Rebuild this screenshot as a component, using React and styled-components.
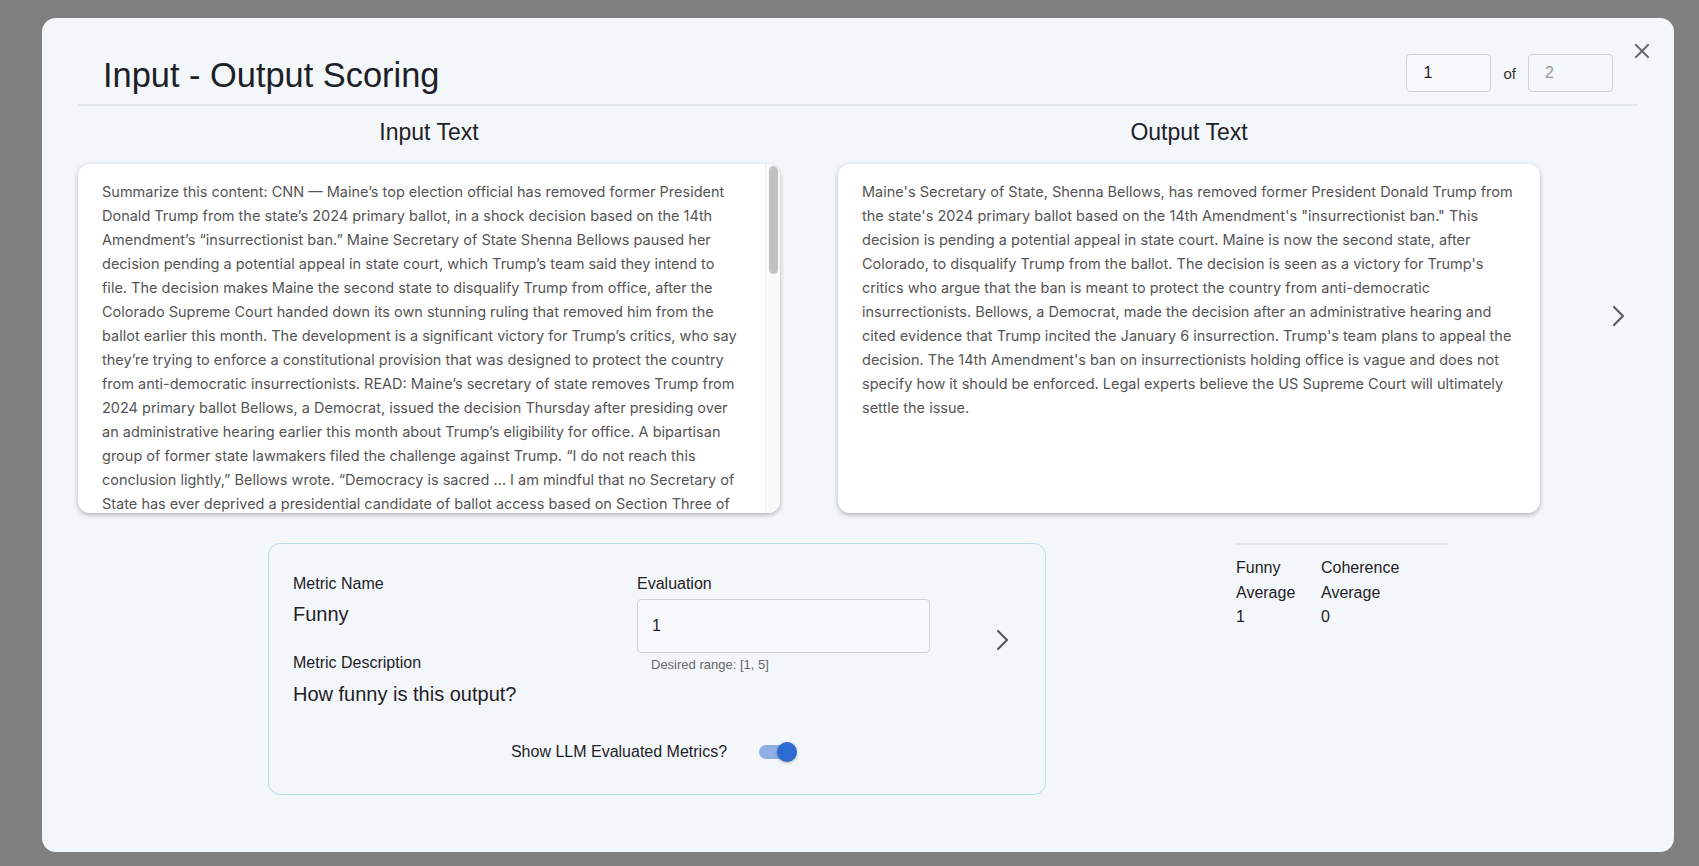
import React from 'react';
import styled, { createGlobalStyle } from 'styled-components';

const GlobalStyle = createGlobalStyle`
  * { box-sizing: border-box; }
  html, body { margin: 0; padding: 0; }
  body {
    background: #7f7f7f;
    font-family: "Liberation Sans", Arial, sans-serif;
    color: #1d2127;
    overflow: hidden;
  }
`;

const Backdrop = styled.div`
  width: 1699px;
  height: 866px;
  padding: 18px 25px 14px 42px;
`;

const Modal = styled.div`
  position: relative;
  width: 1632px;
  height: 834px;
  background: #f4f7fa;
  border-radius: 14px;
  padding: 0 36px;
`;

const CloseButton = styled.button`
  position: absolute;
  top: 19px;
  right: 18px;
  width: 28px;
  height: 28px;
  border: none;
  background: none;
  padding: 0;
  display: flex;
  align-items: center;
  justify-content: center;
  color: #6a6a6a;
`;

const Header = styled.div`
  display: flex;
  align-items: center;
  justify-content: space-between;
  padding: 37px 25px 9px 25px;
  border-bottom: 2px solid #e3e8ee;
`;

const Title = styled.h1`
  margin: 0;
  font-size: 34.4px;
  line-height: 40px;
  font-weight: 400;
  color: #1d2127;
`;

const Pager = styled.div`
  display: flex;
  align-items: center;
  gap: 12px;
  font-size: 15px;
  color: #333;
  margin-top: -4px;
`;

const PageInput = styled.input`
  width: 85px;
  height: 38px;
  border: 1px solid #ccd0d5;
  border-radius: 4px;
  background: ${p => (p.disabled ? '#f4f7fa' : '#f7f9fb')};
  padding: 0 16px;
  font-family: "Liberation Sans", Arial, sans-serif;
  font-size: 16px;
  color: ${p => (p.disabled ? '#9a9a9a' : '#1d2127')};
  outline: none;
`;

const TextGrid = styled.div`
  display: grid;
  grid-template-columns: 702px 702px 1fr;
  column-gap: 58px;
  align-items: center;
  padding-top: 12px;
`;

const TextColumn = styled.div`
  display: flex;
  flex-direction: column;
`;

const ColumnHeading = styled.h2`
  margin: 0 0 18px 0;
  font-size: 23px;
  line-height: 28px;
  font-weight: 400;
  text-align: center;
  color: #1d2127;
`;

const TextCard = styled.div`
  display: flex;
  height: 349px;
  background: #fff;
  border-radius: 12px;
  box-shadow: 0 2px 5px rgba(0, 0, 0, 0.28);
  overflow: hidden;
`;

const CardBody = styled.div`
  flex: 1;
  overflow: hidden;
  padding: 16px 24px;
  font-family: Inter, Roboto, sans-serif;
  font-size: 14.5px;
  line-height: 24px;
  color: #555;
`;

const ScrollTrack = styled.div`
  width: 15px;
  flex-shrink: 0;
  background: #fafafa;
  border-left: 1px solid #ececec;
  padding: 2px 2px 0 3px;
`;

const ScrollThumb = styled.div`
  height: 108px;
  border-radius: 5px;
  background: #c1c1c1;
`;

const NextButton = styled.button`
  justify-self: end;
  margin-right: 12px;
  border: none;
  background: none;
  padding: 0;
  display: flex;
  color: #5c5c5c;
`;

const BottomRow = styled.div`
  display: flex;
  align-items: flex-start;
  gap: 190px;
  padding: 30px 0 0 190px;
`;

const MetricBox = styled.div`
  width: 778px;
  height: 252px;
  border: 1px solid #b9dce9;
  border-radius: 12px;
  padding: 30px 24px 0 24px;
`;

const MetricGrid = styled.div`
  display: grid;
  grid-template-columns: 344px 293px auto;
  align-items: start;
`;

const FieldLabel = styled.div`
  font-size: 16px;
  line-height: 20px;
  color: #1d2127;
  margin-top: ${p => p.top || 0}px;
`;

const FieldValue = styled.div`
  font-size: 20px;
  line-height: 24px;
  color: #1d2127;
  margin-top: ${p => p.top || 0}px;
`;

const EvalInput = styled.input`
  display: block;
  width: 293px;
  height: 54px;
  margin-top: 5px;
  border: 1px solid #cdd1d6;
  border-radius: 4px;
  background: #f7f9fb;
  padding: 0 14px;
  font-family: "Liberation Sans", Arial, sans-serif;
  font-size: 16px;
  color: #1d2127;
  outline: none;
`;

const HelperText = styled.div`
  margin-top: 4px;
  padding-left: 14px;
  font-size: 13px;
  line-height: 16px;
  color: #666;
`;

const MetricNext = styled(NextButton)`
  justify-self: start;
  align-self: center;
  margin: 0 0 0 66px;
`;

const ToggleRow = styled.div`
  display: flex;
  align-items: center;
  justify-content: center;
  gap: 32px;
  margin-top: 34px;
  padding-right: 6px;
  font-size: 16px;
  line-height: 24px;
`;

const Switch = styled.div`
  position: relative;
  width: 38px;
  height: 22px;
  display: flex;
  align-items: center;
`;

const SwitchTrack = styled.div`
  width: 32px;
  height: 14px;
  border-radius: 7px;
  background: #8eaee6;
`;

const SwitchThumb = styled.div`
  position: absolute;
  right: 0;
  top: 1px;
  width: 20px;
  height: 20px;
  border-radius: 50%;
  background: #2e6bd0;
  box-shadow: 0 1px 3px rgba(0, 0, 0, 0.3);
`;

const Stats = styled.div`
  width: 213px;
  border-top: 2px solid #e3e8ee;
  padding-top: 11px;
  display: grid;
  grid-template-columns: 85px auto;
  font-size: 16px;
  line-height: 24.5px;
  color: #1d2127;
`;

const XIcon = () => (
  <svg width="16" height="16" viewBox="0 0 16 16" fill="none" stroke="currentColor" strokeWidth="2" strokeLinecap="square">
    <path d="M2 2l12 12M14 2L2 14" />
  </svg>
);

const Chevron = () => (
  <svg width="14" height="22" viewBox="0 0 14 22" fill="none" stroke="currentColor" strokeWidth="2.2" strokeLinecap="round" strokeLinejoin="round">
    <path d="M2 2l9 9-9 9" />
  </svg>
);

const inputText = `Summarize this content: CNN — Maine’s top election official has removed former President Donald Trump from the state’s 2024 primary ballot, in a shock decision based on the 14th Amendment’s “insurrectionist ban.” Maine Secretary of State Shenna Bellows paused her decision pending a potential appeal in state court, which Trump’s team said they intend to file. The decision makes Maine the second state to disqualify Trump from office, after the Colorado Supreme Court handed down its own stunning ruling that removed him from the ballot earlier this month. The development is a significant victory for Trump’s critics, who say they’re trying to enforce a constitutional provision that was designed to protect the country from anti-democratic insurrectionists. READ: Maine’s secretary of state removes Trump from 2024 primary ballot Bellows, a Democrat, issued the decision Thursday after presiding over an administrative hearing earlier this month about Trump’s eligibility for office. A bipartisan group of former state lawmakers filed the challenge against Trump. “I do not reach this conclusion lightly,” Bellows wrote. “Democracy is sacred … I am mindful that no Secretary of State has ever deprived a presidential candidate of ballot access based on Section Three of the Fourteenth Amendment. I am also mindful, however, that no presidential candidate has ever before engaged in insurrection.”`;

const outputText = `Maine's Secretary of State, Shenna Bellows, has removed former President Donald Trump from the state's 2024 primary ballot based on the 14th Amendment's "insurrectionist ban." This decision is pending a potential appeal in state court. Maine is now the second state, after Colorado, to disqualify Trump from the ballot. The decision is seen as a victory for Trump's critics who argue that the ban is meant to protect the country from anti-democratic insurrectionists. Bellows, a Democrat, made the decision after an administrative hearing and cited evidence that Trump incited the January 6 insurrection. Trump's team plans to appeal the decision. The 14th Amendment's ban on insurrectionists holding office is vague and does not specify how it should be enforced. Legal experts believe the US Supreme Court will ultimately settle the issue.`;

export default function App() {
  return (
    <>
      <GlobalStyle />
      <Backdrop>
        <Modal>
          <CloseButton aria-label="close">
            <XIcon />
          </CloseButton>

          <Header>
            <Title>Input - Output Scoring</Title>
            <Pager>
              <PageInput defaultValue="1" />
              <span>of</span>
              <PageInput defaultValue="2" disabled />
            </Pager>
          </Header>

          <TextGrid>
            <TextColumn>
              <ColumnHeading>Input Text</ColumnHeading>
              <TextCard>
                <CardBody>{inputText}</CardBody>
                <ScrollTrack>
                  <ScrollThumb />
                </ScrollTrack>
              </TextCard>
            </TextColumn>
            <TextColumn>
              <ColumnHeading>Output Text</ColumnHeading>
              <TextCard>
                <CardBody>{outputText}</CardBody>
              </TextCard>
            </TextColumn>
            <NextButton aria-label="next output">
              <Chevron />
            </NextButton>
          </TextGrid>

          <BottomRow>
            <MetricBox>
              <MetricGrid>
                <div>
                  <FieldLabel>Metric Name</FieldLabel>
                  <FieldValue top={8}>Funny</FieldValue>
                  <FieldLabel top={27}>Metric Description</FieldLabel>
                  <FieldValue top={9}>How funny is this output?</FieldValue>
                </div>
                <div>
                  <FieldLabel>Evaluation</FieldLabel>
                  <EvalInput defaultValue="1" />
                  <HelperText>Desired range: [1, 5]</HelperText>
                </div>
                <MetricNext aria-label="next metric">
                  <Chevron />
                </MetricNext>
              </MetricGrid>
              <ToggleRow>
                <span>Show LLM Evaluated Metrics?</span>
                <Switch>
                  <SwitchTrack />
                  <SwitchThumb />
                </Switch>
              </ToggleRow>
            </MetricBox>

            <Stats>
              <div>Funny</div>
              <div>Coherence</div>
              <div>Average</div>
              <div>Average</div>
              <div>1</div>
              <div>0</div>
            </Stats>
          </BottomRow>
        </Modal>
      </Backdrop>
    </>
  );
}
